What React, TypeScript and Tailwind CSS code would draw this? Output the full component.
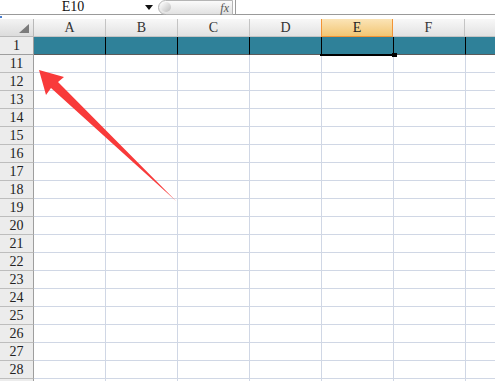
const COLS = ["A", "B", "C", "D", "E", "F", ""];
const ROWS = Array.from({ length: 19 }, (_, i) => 11 + i);

const serif = "font-['Liberation_Serif','DejaVu_Serif',serif]";

function TopBar() {
	return (
		<div className="flex h-[15px] border-b border-[#9a9a9a] bg-white">
			<div className={`flex w-[140px] items-center justify-center pl-[6px] text-[14px] leading-none text-[#111] ${serif}`}>
				E10
			</div>
			<div className="flex w-[18px] items-center justify-center">
				<svg width="8" height="5" viewBox="0 0 8 5">
					<path d="M0 0h8L4 5z" fill="#111" />
				</svg>
			</div>
			<div className="relative flex h-[15px] w-[78px] items-center justify-end border-r border-[#9a9a9a] pr-[6px]">
				<div className="absolute inset-y-0 left-0 right-[2px] rounded-l-full border border-[#b5b5b5] bg-gradient-to-b from-[#fbfbfb] to-[#e2e2e2]" />
				<div className="absolute left-[3px] top-[2px] h-[10px] w-[10px] rounded-full bg-gradient-to-br from-white to-[#bdbdbd]" />
				<span className="relative font-['Liberation_Serif',serif] text-[12px] italic leading-none text-[#555]">
					fx
				</span>
			</div>
			<div className="flex-1" />
		</div>
	);
}

function HeaderRow() {
	return (
		<div className="flex h-[18px]">
			<div className="relative w-[34px] shrink-0 border-r border-b border-[#b9b9b9] bg-gradient-to-b from-[#f3f3f3] to-[#dcdcdc]">
				<svg className="absolute right-[4px] bottom-[3px]" width="10" height="9" viewBox="0 0 10 9">
					<path d="M10 0v9H0z" fill="#7b7b7b" />
				</svg>
			</div>
			{COLS.map((c, i) => (
				<div
					key={i}
					className={
						c === "E"
							? `flex w-[72px] shrink-0 items-center justify-center border-x border-b border-[#f29436] bg-gradient-to-b from-[#fbe4b6] to-[#f2c672] text-[14px] leading-none text-[#222] -ml-px ${serif}`
							: `flex w-[72px] shrink-0 items-center justify-center border-r border-b border-[#c4c4c4] bg-gradient-to-b from-[#f8f8f8] to-[#e2e2e2] text-[14px] leading-none text-[#333] ${serif}`
					}
				>
					{c}
				</div>
			))}
		</div>
	);
}

function FirstRow() {
	return (
		<div className="flex h-[18px]">
			<div className={`flex w-[34px] shrink-0 items-center justify-center border-r border-b border-[#9e9e9e] bg-[#ececec] text-[14px] leading-none text-[#222] ${serif}`}>
				1
			</div>
			{COLS.map((c, i) => (
				<div
					key={i}
					className="relative w-[72px] shrink-0 border-r border-b border-r-black border-b-[#5a5a5a] bg-[#2f8199]"
				>
					{c === "E" && (
						<>
							<div className="absolute left-[-2px] right-0 bottom-[-2px] h-[2px] bg-black" />
							<div className="absolute right-[-4px] bottom-[-3px] z-10 h-[4px] w-[5px] bg-black" />
						</>
					)}
				</div>
			))}
		</div>
	);
}

function GridRow({ n }: { n: number }) {
	return (
		<div className="flex h-[18px]">
			<div className={`flex w-[34px] shrink-0 items-center justify-center border-r border-b border-r-[#9e9e9e] border-b-[#bdbdbd] bg-[#ececec] text-[14px] leading-none text-[#222] ${serif}`}>
				{n < 29 ? n : ""}
			</div>
			{COLS.map((_, i) => (
				<div key={i} className="w-[72px] shrink-0 border-r border-b border-[#d0d7e5] bg-white" />
			))}
		</div>
	);
}

function Arrow() {
	return (
		<svg className="pointer-events-none absolute left-0 top-0" width="495" height="381" viewBox="0 0 495 381">
			<path
				d="M39 70 L64 77 L58 82 L176 201 L51 88 L46 95 Z"
				fill="#f83a3a"
			/>
		</svg>
	);
}

export default function App() {
	return (
		<div className="relative h-[381px] w-[495px] overflow-hidden bg-white">
			<TopBar />
			<div className="relative h-[4px]">
				<div className="absolute left-0 top-[1px] h-[2px] w-[2px] bg-[#4a7fd0]" />
			</div>
			<HeaderRow />
			<FirstRow />
			{ROWS.map((n) => (
				<GridRow key={n} n={n} />
			))}
			<Arrow />
		</div>
	);
}
